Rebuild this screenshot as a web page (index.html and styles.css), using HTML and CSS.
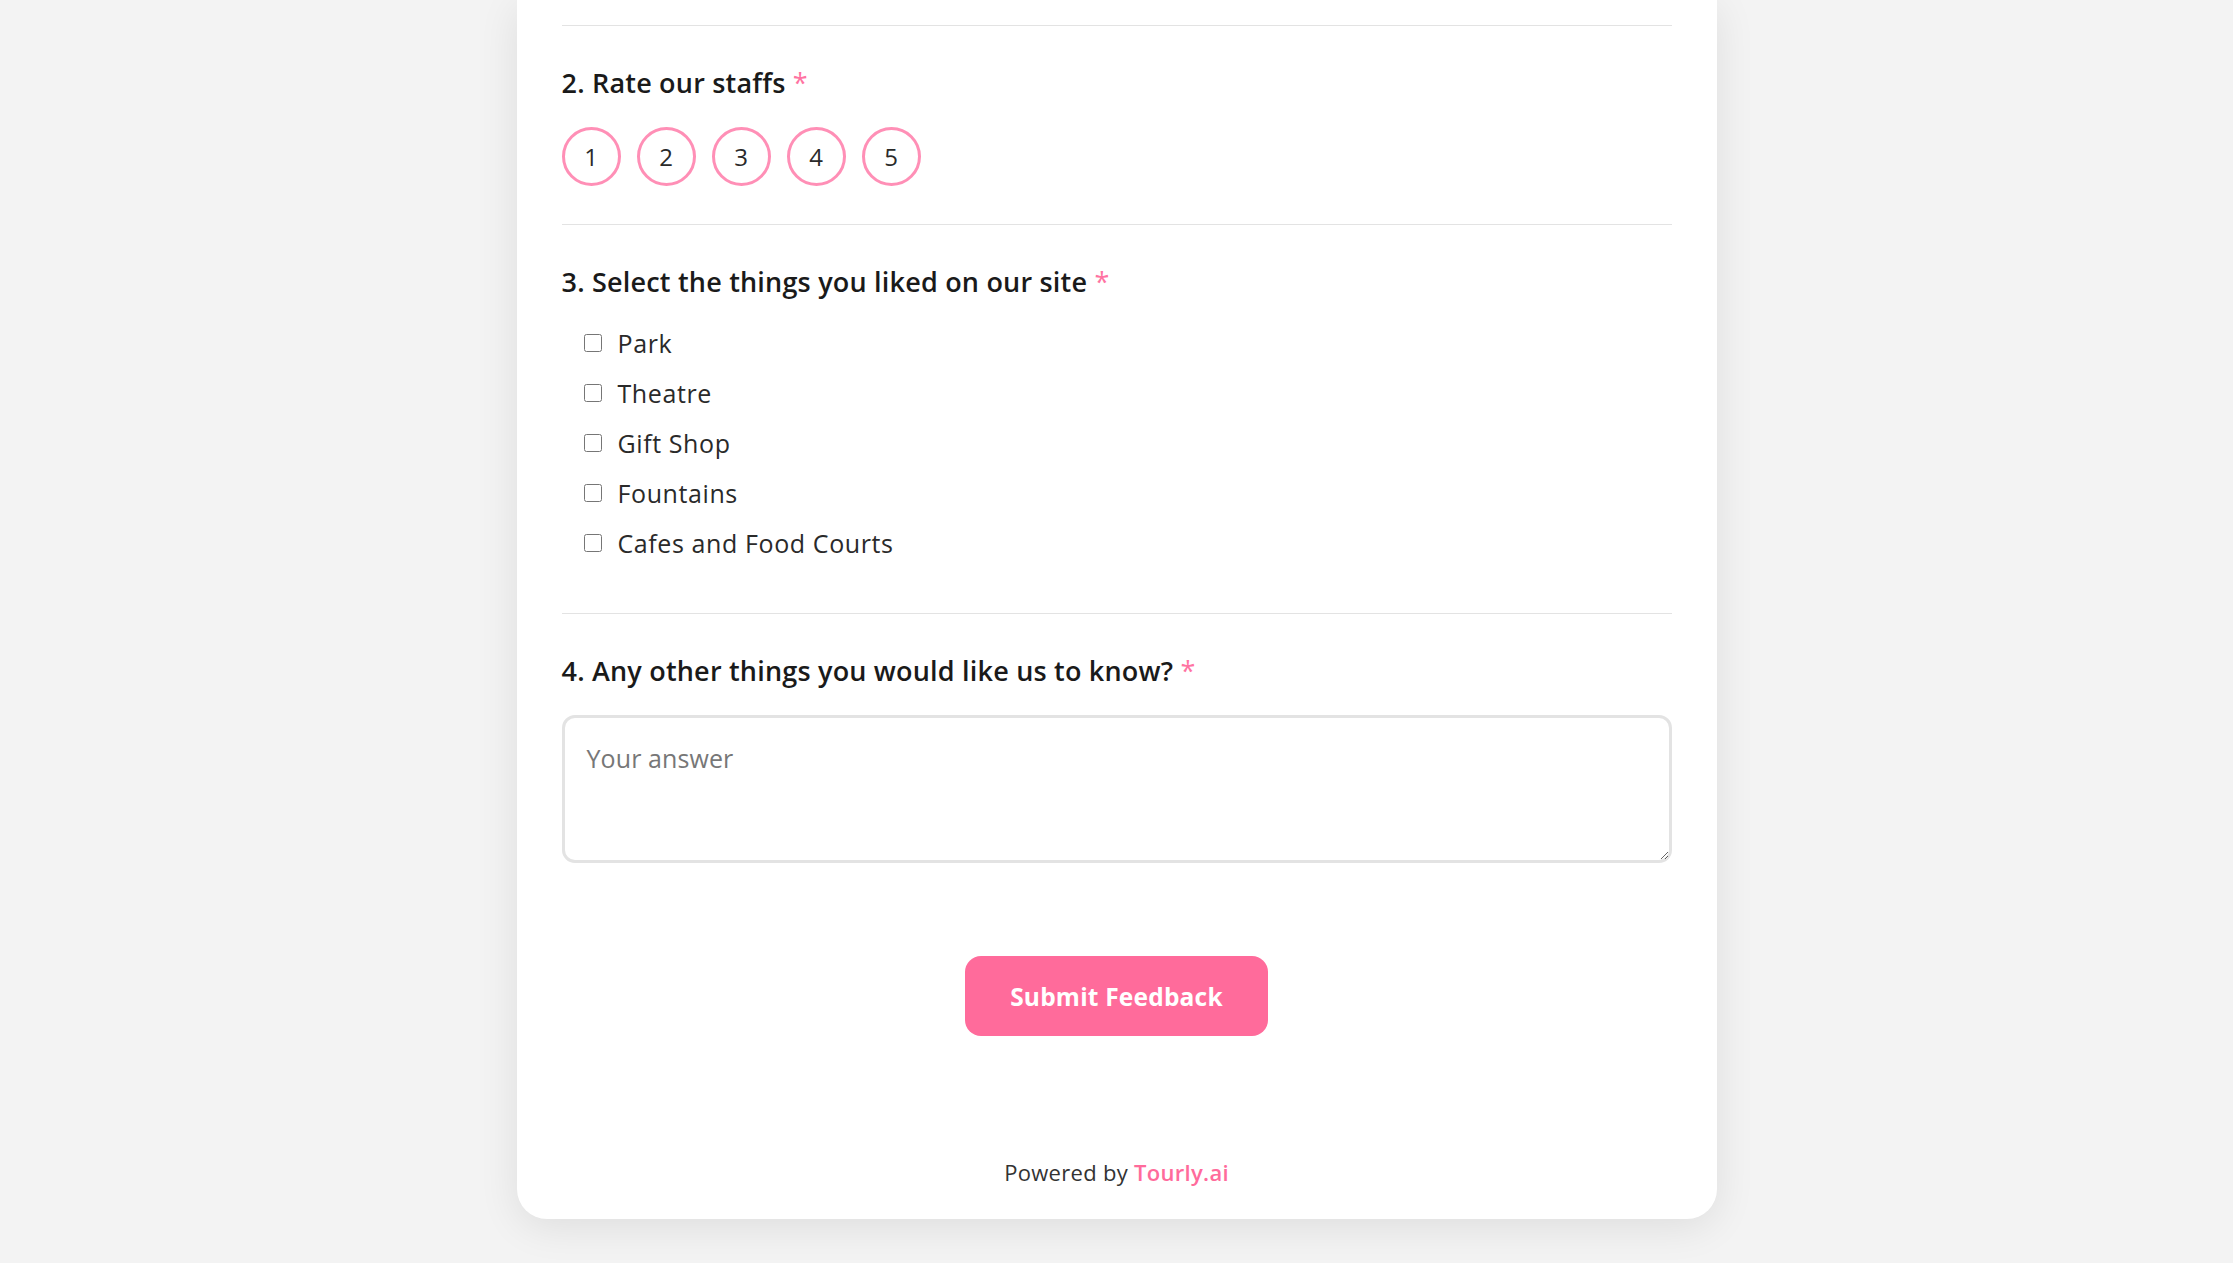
FILE: index.html
```html
<!DOCTYPE html>
<html lang="en">
<head>
<meta charset="utf-8">
<title>Feedback</title>
<link rel="stylesheet" href="styles.css">
</head>
<body>
<main class="card">
  <div class="section-tail"></div>

  <section class="question">
    <h2 class="q-title">2. Rate our staffs <span class="req">*</span></h2>
    <div class="rating">
      <button class="rate" type="button">1</button>
      <button class="rate" type="button">2</button>
      <button class="rate" type="button">3</button>
      <button class="rate" type="button">4</button>
      <button class="rate" type="button">5</button>
    </div>
  </section>

  <section class="question q-checks">
    <h2 class="q-title">3. Select the things you liked on our site <span class="req">*</span></h2>
    <div class="checks">
      <label class="check"><input type="checkbox"><span>Park</span></label>
      <label class="check"><input type="checkbox"><span>Theatre</span></label>
      <label class="check"><input type="checkbox"><span>Gift Shop</span></label>
      <label class="check"><input type="checkbox"><span>Fountains</span></label>
      <label class="check"><input type="checkbox"><span>Cafes and Food Courts</span></label>
    </div>
  </section>

  <section class="question q-last">
    <h2 class="q-title">4. Any other things you would like us to know? <span class="req">*</span></h2>
    <textarea class="answer" placeholder="Your answer"></textarea>
  </section>

  <div class="actions">
    <button class="submit" type="button">Submit Feedback</button>
  </div>

  <footer class="powered">Powered by <span class="brand">Tourly.ai</span></footer>
</main>
</body>
</html>
```

FILE: styles.css
```css
html, body {
  margin: 0;
  padding: 0;
}

body {
  background: #f3f3f3;
  font-family: "Open Sans", "Liberation Sans", sans-serif;
  color: #1c1c1c;
  display: flex;
  justify-content: center;
  padding-bottom: 44px;
}

.card {
  width: 1200px;
  box-sizing: border-box;
  background: #ffffff;
  border-radius: 0 0 30px 30px;
  box-shadow: 0 8px 40px rgba(0, 0, 0, 0.09);
  padding: 0 45px 30px;
  display: flex;
  flex-direction: column;
}

.section-tail {
  height: 25px;
  border-bottom: 1px solid #e3e3e3;
}

.question {
  padding: 39px 0 38px;
  border-bottom: 1px solid #e3e3e3;
}

.q-checks {
  padding-bottom: 45px;
}

.q-last {
  border-bottom: none;
  padding-bottom: 0;
}

.q-title {
  margin: 0;
  font-size: 27px;
  line-height: 36px;
  font-weight: 600;
  color: #1a1a1a;
  letter-spacing: 0.2px;
}

.req {
  color: #ff73a2;
  font-weight: 500;
}

.rating {
  margin-top: 26px;
  display: flex;
  gap: 16px;
}

.rate {
  width: 59px;
  height: 59px;
  box-sizing: border-box;
  border-radius: 50%;
  border: 3px solid #ff8fb6;
  background: #ffffff;
  color: #2a2a2a;
  font-family: "Open Sans", "Liberation Sans", sans-serif;
  font-size: 24px;
  font-weight: 400;
  padding: 0;
  display: flex;
  align-items: center;
  justify-content: center;
}

.checks {
  margin-top: 18px;
  padding-left: 22px;
  display: flex;
  flex-direction: column;
}

.check {
  height: 50px;
  display: flex;
  align-items: center;
  font-size: 25px;
  letter-spacing: 0.6px;
  color: #2a2a2a;
}

.check input {
  width: 18px;
  height: 18px;
  margin: 0 16px 0 0;
}

.answer {
  display: block;
  margin-top: 26px;
  width: 100%;
  height: 148px;
  box-sizing: border-box;
  border: 3px solid #e3e3e3;
  border-radius: 13px;
  padding: 25px 22px;
  font-family: "Open Sans", "Liberation Sans", sans-serif;
  font-size: 25px;
  letter-spacing: 0.1px;
  line-height: 30px;
  color: #222;
  outline: none;
}

.answer::placeholder {
  color: #777777;
}

.actions {
  margin-top: 93px;
  display: flex;
  justify-content: center;
}

.submit {
  width: 303px;
  height: 80px;
  border: none;
  border-radius: 16px;
  background: #ff6b9b;
  color: #ffffff;
  font-family: "Open Sans", "Liberation Sans", sans-serif;
  font-size: 24.5px;
  letter-spacing: 0.2px;
  font-weight: 700;
}

.powered {
  margin-top: 119px;
  text-align: center;
  font-size: 22px;
  letter-spacing: 0.3px;
  line-height: 34px;
  color: #333333;
}

.brand {
  color: #ff6b9b;
  font-weight: 600;
}
```
